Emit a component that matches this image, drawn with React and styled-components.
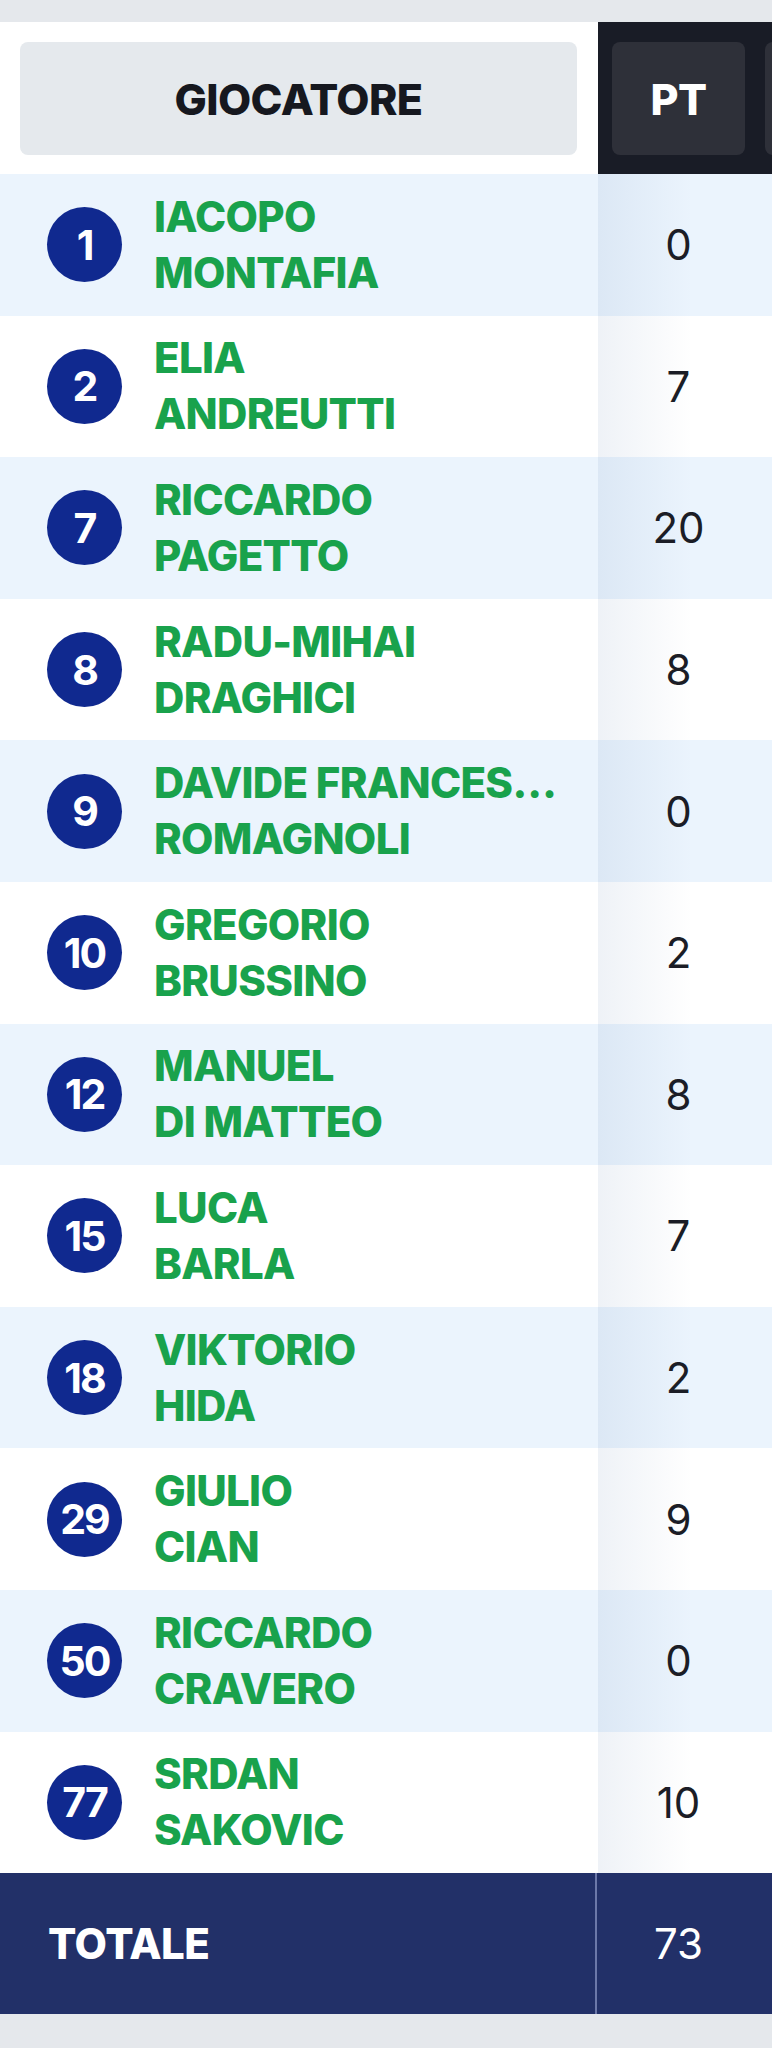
import React from "react"
import styled, { createGlobalStyle } from "styled-components"

const c = {
  page: "#e5e8ec",
  headBtn: "#e5e9ed",
  ink: "#16181f",
  dark: "#191c26",
  darkBtn: "#2e3039",
  light: "#ebf4fd",
  white: "#ffffff",
  green: "#19a24c",
  badge: "#10298f",
  total: "#223068",
  divider: "#6c78a9",
}

const players = [
  { num: 1, first: "IACOPO", last: "MONTAFIA", pt: 0 },
  { num: 2, first: "ELIA", last: "ANDREUTTI", pt: 7 },
  { num: 7, first: "RICCARDO", last: "PAGETTO", pt: 20 },
  { num: 8, first: "RADU-MIHAI", last: "DRAGHICI", pt: 8 },
  { num: 9, first: "DAVIDE FRANCESCO", last: "ROMAGNOLI", pt: 0 },
  { num: 10, first: "GREGORIO", last: "BRUSSINO", pt: 2 },
  { num: 12, first: "MANUEL", last: "DI MATTEO", pt: 8 },
  { num: 15, first: "LUCA", last: "BARLA", pt: 7 },
  { num: 18, first: "VIKTORIO", last: "HIDA", pt: 2 },
  { num: 29, first: "GIULIO", last: "CIAN", pt: 9 },
  { num: 50, first: "RICCARDO", last: "CRAVERO", pt: 0 },
  { num: 77, first: "SRDAN", last: "SAKOVIC", pt: 10 },
]

const GlobalStyle = createGlobalStyle`
  html, body {
    margin: 0;
    padding: 0;
    background: ${c.page};
    font-family: Inter, "Liberation Sans", sans-serif;
  }
`

const Page = styled.div`
  padding: 22px 0 34px;
  overflow: hidden;
`

const Table = styled.div`
  display: flex;
  flex-direction: column;
  width: 100%;
`

const Row = styled.div`
  display: grid;
  grid-template-columns: 598px 161px 1fr;
  height: ${p => p.$h || "141.6px"};
  background: ${p => p.$bg};
`

const HeadLeft = styled.div`
  background: ${c.white};
  padding: 20px 21px 19px 20px;
  display: flex;
`

const HeadButton = styled.div`
  flex: ${p => (p.$fixed ? "0 0 133px" : "1")};
  display: flex;
  align-items: center;
  justify-content: center;
  border-radius: 8px;
  background: ${p => (p.$dark ? c.darkBtn : c.headBtn)};
  color: ${p => (p.$dark ? c.white : c.ink)};
  font-size: 43px;
  font-weight: 800;
  letter-spacing: -0.6px;
`

const HeadCell = styled.div`
  background: ${c.dark};
  padding: ${p => (p.$edge ? "20px 0 19px 6px" : "20px 14px 19px 14px")};
  display: flex;
  overflow: hidden;
`

const PlayerCell = styled.div`
  display: flex;
  align-items: center;
  padding-left: 47px;
  gap: 32px;
`

const Badge = styled.div`
  flex: 0 0 75px;
  height: 75px;
  border-radius: 50%;
  background: ${c.badge};
  color: ${c.white};
  display: flex;
  align-items: center;
  justify-content: center;
  font-size: 41px;
  font-weight: 700;
  letter-spacing: -2px;
`

const Name = styled.div`
  width: 404px;
  color: ${c.green};
  font-size: 42px;
  font-weight: 800;
  line-height: 56px;
  letter-spacing: -0.7px;
`

const NameLine = styled.div`
  white-space: nowrap;
  overflow: hidden;
  text-overflow: ellipsis;
`

const ValueCell = styled.div`
  display: flex;
  align-items: center;
  justify-content: center;
  font-size: 42px;
  font-weight: 400;
  color: ${p => p.$color || "#1b1d26"};
  background: ${p =>
    p.$shade
      ? "linear-gradient(to right, rgba(20, 70, 140, 0.07), rgba(20, 70, 140, 0) 95px)"
      : "none"};
`

const TotalLabel = styled.div`
  display: flex;
  align-items: center;
  padding-left: 48px;
  color: ${c.white};
  font-size: 42px;
  font-weight: 800;
  letter-spacing: -0.5px;
  border-right: 2px solid ${c.divider};
  margin-right: 1px;
`

const PlayerRow = ({ player, index }) => (
  <Row $bg={index % 2 === 0 ? c.light : c.white}>
    <PlayerCell>
      <Badge>{player.num}</Badge>
      <Name>
        <NameLine>{player.first}</NameLine>
        <NameLine>{player.last}</NameLine>
      </Name>
    </PlayerCell>
    <ValueCell $shade>{player.pt}</ValueCell>
    <div />
  </Row>
)

const App = () => {
  const total = players.reduce((s, p) => s + p.pt, 0)
  return (
    <Page>
      <GlobalStyle />
      <Table>
        <Row $h="152px" $bg={c.dark}>
          <HeadLeft>
            <HeadButton>GIOCATORE</HeadButton>
          </HeadLeft>
          <HeadCell>
            <HeadButton $dark>PT</HeadButton>
          </HeadCell>
          <HeadCell $edge>
            <HeadButton $dark $fixed>
              &nbsp;
            </HeadButton>
          </HeadCell>
        </Row>
        {players.map((p, i) => (
          <PlayerRow key={p.num} player={p} index={i} />
        ))}
        <Row $h="141px" $bg={c.total}>
          <TotalLabel>TOTALE</TotalLabel>
          <ValueCell $color={c.white}>{total}</ValueCell>
          <div />
        </Row>
      </Table>
    </Page>
  )
}

export default App
